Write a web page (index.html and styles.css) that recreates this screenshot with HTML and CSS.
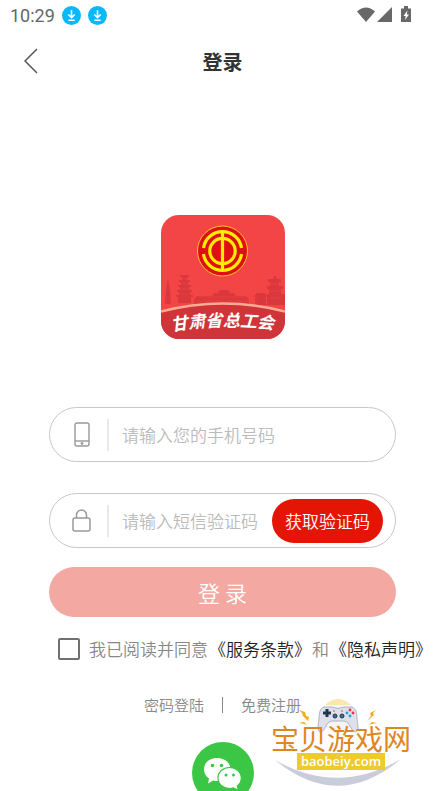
FILE: index.html
```html
<!DOCTYPE html>
<html lang="zh-CN">
<head>
  <meta charset="UTF-8">
  <meta name="viewport" content="width=device-width, initial-scale=1.0">
  <title>登录</title>
  <link rel="stylesheet" href="styles.css">
</head>
<body>
  <div class="page">
    <div class="status-bar">
      <div class="status-left">
        <span class="time">10:29</span>
        <svg class="download-icon" viewBox="0 0 18 18">
          <circle cx="9" cy="9" r="9" fill="#06b9fb"/>
          <path d="M9 4v6.500M6 8l3 3 3-3M6 13.500h6" fill="none" stroke="#fff" stroke-width="1.500"/>
        </svg>
        <svg class="download-icon" viewBox="0 0 18 18">
          <circle cx="9" cy="9" r="9" fill="#06b9fb"/>
          <path d="M9 4v6.500M6 8l3 3 3-3M6 13.500h6" fill="none" stroke="#fff" stroke-width="1.500"/>
        </svg>
      </div>
      <svg class="signal-icons" viewBox="0 0 55 18" fill="#686868">
        <path d="M0 5.500Q9 -2.500 18 5.500L9 16z"/>
        <path d="M35 1v15H20z"/>
        <path d="M44 2.500h3V0h4v2.500h3V16H44z"/>
        <path d="M50.500 4.500l-4 5.500h2.200l-.7 4 4-5.500h-2.200z" fill="#fff"/>
      </svg>
    </div>

    <header class="header">
      <button class="back-btn" aria-label="返回">
        <svg viewBox="0 0 14 26"><path d="M13 1L1 13l12 12" fill="none" stroke="#555" stroke-width="1.500"/></svg>
      </button>
      <h1>登录</h1>
    </header>

    <main class="login">
      <svg class="app-logo" viewBox="0 0 124 124" role="img" aria-label="甘肃省总工会">
        <defs>
          <clipPath id="logo-shape"><rect width="124" height="124" rx="18"/></clipPath>
          <path id="logo-curve" d="M11 116Q62 107 123 116"/>
        </defs>
        <g clip-path="url(#logo-shape)">
          <rect width="124" height="124" fill="#f34545"/>
          <!-- skyline -->
          <g fill="#cb3138" opacity=".6">
            <path d="M4 89l1-14 1-6 1-6 1 6 1 6 1 14z"/>
            <path d="M22 58l1 2h5v2h-2v3h3v2h-2v3h3v2h-2v3h3v2h-2v3h3v2h-2v6H17v-6h-2v-2h3v-3h-2v-2h3v-3h-2v-2h3v-3h-2v-2h3v-3h-2v-2h4z"/>
            <path d="M33 84l3-3h15l2-3h4l1-3h10l1 3h4l2 3h10l3 3v6H33z"/>
            <path d="M94 90v-8h-2l4-4h8l3 4h-2v8z"/>
            <path d="M114 60l2 4h4v3h-2v4h4v3h-2v5h4v11h-18V79h2v-5h-2v-3h3v-4h-2v-3h5z"/>
          </g>
          <path d="M38 82h58M36 86h61M21 64h5M21 69h5M20 74h7M20 79h7M109 69h9M109 76h11M109 83h12" stroke="#f34545" stroke-width="1" opacity=".6"/>
          <path d="M0 96Q62 80 124 96V124H0z" fill="#ce3438"/>
          <path d="M0 96.500Q62 80.500 124 96.500" fill="none" stroke="#ffab94" stroke-width="2.500"/>
          <!-- union emblem -->
          <circle cx="61.500" cy="36" r="25" fill="#df1012" stroke="#f4c52a" stroke-width="1"/>
          <g fill="none" stroke="#ffed00" stroke-width="3.200">
            <path d="M42.500 33A19.200 19.200 0 0 1 80.500 33M80.500 39A19.200 19.200 0 0 1 42.500 39"/>
            <circle cx="61.500" cy="36" r="12.700"/>
            <path d="M61.500 17v38"/>
          </g>
          <text class="logo-text"><textPath href="#logo-curve">甘肃省总工会</textPath></text>
        </g>
      </svg>

      <form class="login-form">
        <div class="field">
          <label for="phone" aria-label="手机号码">
            <svg class="field-icon" viewBox="0 0 20 26" fill="none" stroke="#999" stroke-width="1.400">
              <rect x="3" y="1" width="14" height="23" rx="2"/>
              <path d="M3 19h14"/>
              <circle cx="10" cy="21.500" r=".7"/>
            </svg>
          </label>
          <input type="tel" id="phone" placeholder="请输入您的手机号码">
        </div>
        <div class="field">
          <label for="code" aria-label="短信验证码">
            <svg class="field-icon" viewBox="0 0 20 26" fill="none" stroke="#999" stroke-width="1.500">
              <rect x="1" y="10" width="17" height="13" rx="2"/>
              <path d="M4.500 10V7a5 5 0 0 1 10 0v3"/>
            </svg>
          </label>
          <input type="text" id="code" placeholder="请输入短信验证码">
          <button type="button" class="code-btn">获取验证码</button>
        </div>
        <button type="submit" class="login-btn">登 录</button>
        <div class="agreement">
          <input type="checkbox" id="agree">
          <label for="agree">我已阅读并同意</label>
          <a href="#">《服务条款》</a>
          <span>和</span>
          <a href="#">《隐私声明》</a>
        </div>
      </form>

      <nav class="links">
        <a href="#">密码登陆</a>
        <a href="#">免费注册</a>
      </nav>

      <button class="wechat-btn" aria-label="微信登录">
        <svg viewBox="0 0 62 62">
          <circle cx="31" cy="31" r="31" fill="#3cc645"/>
          <path d="M25 16c-8 0-13 5-13 11.500 0 4 2 7 5 9l-1 5 5-3c2 .5 3 .7 5 .6 8 0 12.500-5 12.500-11.600S33 16 25 16z" fill="#fff"/>
          <path d="M37.500 25.500c-6.500 0-11.500 4.500-11.500 10.500s5 10.500 11.500 10.500c1.500 0 3-.2 4-.6l5 2.600-1.200-4.500c2.500-2 4-4.500 4-8 0-6-5.300-10.500-11.800-10.500z" fill="#fff" stroke="#3cc645" stroke-width="1.200"/>
          <g fill="#3cc645">
            <circle cx="20.500" cy="23.500" r="1.800"/><circle cx="29.500" cy="23.500" r="1.800"/>
            <circle cx="34" cy="33" r="1.500"/><circle cx="41.500" cy="33" r="1.500"/>
          </g>
        </svg>
      </button>
    </main>

    <div class="watermark">
      <svg class="watermark-art" viewBox="0 0 140 92">
        <circle cx="67" cy="17" r="17" fill="#f5f5f5"/>
        <path d="M54 6q13-12 26 0z" fill="#f9e7ae"/>
        <path d="M53 8h7q7 3 14 0h7c4 1 5 6 5 12 1 7 2 11-1 13-4 0-5-5-8-9-2-2-4-2-5-2H62c-1 0-3 0-5 2-3 4-4 9-8 9-3-2-2-6-1-13 0-6 1-11 5-12z" fill="#dfe0ec" stroke="#aeb2c6" stroke-width="1"/>
        <path d="M56 10v8M52 14h8" stroke="#20364c" stroke-width="3"/>
        <g fill="#2f7590" stroke="#20364c" stroke-width="1"><circle cx="64" cy="17" r="2"/><circle cx="71" cy="17" r="2"/></g>
        <circle cx="79" cy="11" r="1.400" fill="#e5363e"/><circle cx="79" cy="17" r="1.400" fill="#21a4cf"/>
        <circle cx="76" cy="14" r="1.400" fill="#21a4cf"/><circle cx="82" cy="14" r="1.400" fill="#e5363e"/>
        <path d="M62 12h2M70 12h2" stroke="#d84e64" stroke-width="1"/>
        <path d="M28 11l6 2 1 4 3 1-1 4-5-5-1-3zM28 24l5-1 3 3-3-1zM105 11l-6 3 1 3-4 5 7-6-1-2zM106 24l-5-1-3 3 3-1z" fill="#f3ac1e"/>
        <path d="M4 61Q67 113 130 60Q67 97 4 61z" fill="#c9ccda"/>
      </svg>
      <div class="watermark-text">
        <strong>宝贝游戏网</strong>
        <span>baobeiy.com</span>
      </div>
    </div>
  </div>
</body>
</html>
```
FILE: styles.css
```css
* {
  box-sizing: border-box;
}

body {
  margin: 0;
  background-color: #fff;
  color: #333;
  font-family: "Noto Sans CJK SC", sans-serif;
  font-weight: 350;
}

button,
input {
  font: inherit;
}

button {
  border: none;
  padding: 0;
  cursor: pointer;
}

a {
  color: inherit;
  text-decoration: none;
}

svg {
  display: block;
}

.page {
  position: relative;
  height: 100vh;
  overflow: hidden;
}

/* Status bar */
.status-bar {
  display: flex;
  justify-content: space-between;
  align-items: center;
  height: 30px;
  padding: 0 33px 0 10px;
}

.status-left {
  display: flex;
  align-items: center;
  gap: 7px;
}

.time {
  font-family: Roboto, sans-serif;
  font-size: 18px;
  font-weight: 400;
  color: #666;
}

.download-icon {
  width: 19px;
  height: 19px;
}

.signal-icons {
  width: 55px;
  height: 18px;
}

/* Header */
.header {
  display: grid;
  grid-template-columns: 62px 1fr 62px;
  align-items: center;
  height: 62px;
}

.header h1 {
  margin: 0;
  font-size: 20px;
  font-weight: 700;
  text-align: center;
}

.back-btn {
  display: flex;
  justify-content: center;
  background: none;
}

.back-btn svg {
  width: 14px;
  height: 26px;
}

/* Login */
.login {
  display: flex;
  flex-direction: column;
  align-items: center;
  padding-top: 123px;
}

.app-logo {
  width: 124px;
  height: 124px;
}

.logo-text {
  font-size: 17px;
  font-weight: 700;
  font-style: italic;
  fill: #fff;
}

.login-form {
  width: 100%;
  padding: 68px 49px 0;
}

.field {
  display: flex;
  align-items: center;
  height: 55px;
  margin-bottom: 31px;
  padding: 0 12px 0 22px;
  border: 1px solid #c8c8c8;
  border-radius: 28px;
}

.field label {
  padding: 3px 15px 3px 0;
  border-right: 2px solid #e8e8e8;
}

.field-icon {
  width: 20px;
  height: 26px;
}

.field input {
  flex: 1;
  min-width: 0;
  padding: 0 0 0 13px;
  border: none;
  outline: none;
  background: none;
  font-size: 17px;
}

.field input::placeholder {
  color: #bbb;
}

.code-btn {
  width: 111px;
  height: 44px;
  border-radius: 22px;
  background-color: #e51505;
  color: #fff;
  font-size: 17px;
}

.login-btn {
  width: 100%;
  height: 50px;
  margin-top: -12px;
  border-radius: 25px;
  background-color: #f3a9a1;
  color: #fff;
  font-size: 22px;
}

.agreement {
  display: flex;
  align-items: center;
  gap: 1px;
  margin: 19px -20px 0 9px;
  font-size: 17px;
  line-height: 26px;
  color: #888;
  white-space: nowrap;
}

.agreement input {
  appearance: none;
  flex: none;
  width: 22px;
  height: 22px;
  margin: 0 8px 0 0;
  border: 2px solid #707070;
  border-radius: 2px;
}

.agreement a {
  color: #222;
}

.links {
  display: flex;
  align-items: center;
  margin-top: 32px;
  font-size: 15px;
  line-height: 22px;
  color: #888;
}

.links a + a::before {
  content: "";
  display: inline-block;
  width: 1px;
  height: 16px;
  margin: 0 18px;
  background-color: #888;
  vertical-align: -2px;
}

.wechat-btn {
  margin-top: 26px;
  background: none;
}

.wechat-btn svg {
  width: 62px;
  height: 62px;
}

/* Watermark */
.watermark {
  position: absolute;
  right: 34px;
  bottom: 0;
  width: 140px;
  height: 92px;
}

.watermark-art {
  width: 140px;
  height: 92px;
}

.watermark-text {
  position: absolute;
  top: 24px;
  left: 0;
  display: flex;
  flex-direction: column;
  align-items: center;
  width: 100%;
}

.watermark-text strong {
  font-size: 28px;
  font-weight: 400;
  line-height: 30px;
  color: #df861d;
}

.watermark-text span {
  padding: 0 4px;
  background-color: #eccb2b;
  color: #fff;
  font-family: "Open Sans", sans-serif;
  font-size: 13px;
  font-weight: 600;
  line-height: 17px;
}
```
